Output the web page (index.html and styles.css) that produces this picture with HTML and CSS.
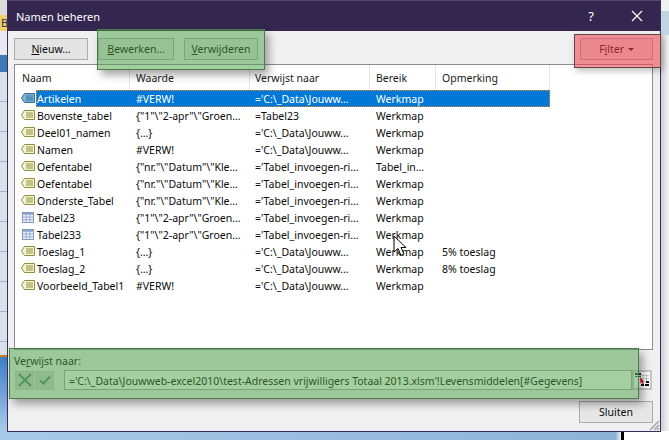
FILE: index.html
```html
<!DOCTYPE html>
<html lang="nl">
<head>
<meta charset="utf-8">
<title>Namen beheren</title>
<link rel="stylesheet" href="styles.css">
</head>
<body>
<svg class="defs" width="0" height="0" aria-hidden="true">
  <symbol id="tag" viewBox="0 0 14 11">
    <path d="M3.5.5H13.5V9.5H3.5L.5 5Z" fill="#f4f3d8" stroke="#8f9035"/>
    <path d="M5 3H12M5 5H12M5 7H12" stroke="#8f9035" stroke-width="1"/>
  </symbol>
  <symbol id="tag-sel" viewBox="0 0 14 11">
    <path d="M3.5.5H13.5V9.5H3.5L.5 5Z" fill="#7fb4d6" stroke="#2f6e9a"/>
    <path d="M5 3H12M5 5H12M5 7H12" stroke="#2f6e9a" stroke-width="1"/>
  </symbol>
  <symbol id="grid" viewBox="0 0 13 12">
    <rect x=".5" y=".5" width="12" height="11" fill="#eef2fa" stroke="#7b8fb8"/>
    <rect x="1" y="1" width="11" height="2" fill="#8ea3cc"/>
    <path d="M4.5 1V11M8.5 1V11M1 5.5H12M1 8.5H12" stroke="#93a6cc"/>
  </symbol>
</svg>

<div class="desk">
  <div class="left-strip">
    <div class="s-grey"></div>
    <div class="s-yellow">B</div>
    <div class="s-light"></div>
    <div class="s-blue"></div>
    <div class="s-cells"></div>
    <div class="s-sky"></div>
  </div>
  <div class="right-strip">
    <div class="r-white"></div>
    <div class="r-blue"></div>
    <div class="r-rest"></div>
    <div class="r-foot"></div>
  </div>
</div>
<div class="foot-bar"></div>

<section class="dialog">
  <header class="titlebar">
    <span class="title">Namen beheren</span>
    <span class="help">?</span>
    <svg class="close" width="12" height="12" viewBox="0 0 12 12"><path d="M1 1L11 11M11 1L1 11" stroke="#fff" stroke-width="1.2" fill="none"/></svg>
  </header>
  <div class="content">
    <div class="toolbar">
      <button class="btn new"><u>N</u>ieuw…</button>
      <button class="btn edit"><u>B</u>ewerken…</button>
      <button class="btn del"><u>V</u>erwijderen</button>
      <button class="btn filter">F<u>i</u>lter <span class="caret"></span></button>
    </div>
    <div class="list">
      <div class="list-head">
        <div>Naam</div><div>Waarde</div><div>Verwijst naar</div><div>Bereik</div><div>Opmerking</div>
      </div>
      <div class="row selected"><svg class="ic"><use href="#tag-sel"/></svg><div class="cells"><span>Artikelen</span><span>#VERW!</span><span>='C:\_Data\Jouww…</span><span>Werkmap</span><span></span></div></div>
      <div class="row"><svg class="ic"><use href="#tag"/></svg><div class="cells"><span>Bovenste_tabel</span><span>{"1"\"2-apr"\"Groen…</span><span>=Tabel23</span><span>Werkmap</span><span></span></div></div>
      <div class="row"><svg class="ic"><use href="#tag"/></svg><div class="cells"><span>Deel01_namen</span><span>{…}</span><span>='C:\_Data\Jouww…</span><span>Werkmap</span><span></span></div></div>
      <div class="row"><svg class="ic"><use href="#tag"/></svg><div class="cells"><span>Namen</span><span>#VERW!</span><span>='C:\_Data\Jouww…</span><span>Werkmap</span><span></span></div></div>
      <div class="row"><svg class="ic"><use href="#tag"/></svg><div class="cells"><span>Oefentabel</span><span>{"nr."\"Datum"\"Kle…</span><span>='Tabel_invoegen-ri…</span><span>Tabel_in…</span><span></span></div></div>
      <div class="row"><svg class="ic"><use href="#tag"/></svg><div class="cells"><span>Oefentabel</span><span>{"nr."\"Datum"\"Kle…</span><span>='Tabel_invoegen-ri…</span><span>Werkmap</span><span></span></div></div>
      <div class="row"><svg class="ic"><use href="#tag"/></svg><div class="cells"><span>Onderste_Tabel</span><span>{"nr."\"Datum"\"Kle…</span><span>='Tabel_invoegen-ri…</span><span>Werkmap</span><span></span></div></div>
      <div class="row"><svg class="ic"><use href="#grid"/></svg><div class="cells"><span>Tabel23</span><span>{"1"\"2-apr"\"Groen…</span><span>='Tabel_invoegen-ri…</span><span>Werkmap</span><span></span></div></div>
      <div class="row"><svg class="ic"><use href="#grid"/></svg><div class="cells"><span>Tabel233</span><span>{"1"\"2-apr"\"Groen…</span><span>='Tabel_invoegen-ri…</span><span>Werkmap</span><span></span></div></div>
      <div class="row"><svg class="ic"><use href="#tag"/></svg><div class="cells"><span>Toeslag_1</span><span>{…}</span><span>='C:\_Data\Jouww…</span><span>Werkmap</span><span>5% toeslag</span></div></div>
      <div class="row"><svg class="ic"><use href="#tag"/></svg><div class="cells"><span>Toeslag_2</span><span>{…}</span><span>='C:\_Data\Jouww…</span><span>Werkmap</span><span>8% toeslag</span></div></div>
      <div class="row"><svg class="ic"><use href="#tag"/></svg><div class="cells"><span>Voorbeeld_Tabel1</span><span>#VERW!</span><span>='C:\_Data\Jouww…</span><span>Werkmap</span><span></span></div></div>
    </div>
    <label class="ref-label">Ve<u>r</u>wijst naar:</label>
    <div class="ref-row">
      <div class="ref-btn">
        <svg width="14" height="14" viewBox="0 0 14 14"><path d="M1 1L13 13M13 1L1 13" stroke="#5a8a7c" stroke-width="2" fill="none"/></svg>
      </div>
      <div class="ref-btn">
        <svg width="12" height="10" viewBox="0 0 12 10"><path d="M1 5.5L4.5 8.5L11 1.5" stroke="#5a8a7c" stroke-width="2" fill="none"/></svg>
      </div>
      <div class="ref-input">='C:\_Data\Jouwweb-excel2010\test-Adressen vrijwilligers Totaal 2013.xlsm'!Levensmiddelen[#Gegevens]</div>
      <div class="ref-pick">
        <svg width="16" height="14" viewBox="0 0 16 14">
          <path d="M6 2.5H15M6 5.5H15M6 8.5H11M9 1V9M12.5 1V9" stroke="#c9c9c9"/>
          <rect x="1" y="0" width="6" height="2" fill="#0c2b66"/>
          <rect x="1" y="3" width="6" height="1" fill="#1e6e3c"/>
          <path d="M6 4L10 8.5L8.6 8.7L10 11L9 11.5L7.8 9.4L6.6 10.4Z" fill="#d8101c"/>
          <rect x="7" y="11" width="3" height="2" fill="#111"/>
          <rect x="11" y="11" width="4" height="2" fill="#111"/>
          <rect x="12" y="8" width="3" height="2" fill="#111"/>
        </svg>
      </div>
    </div>
    <div class="actions">
      <button class="btn close-btn">Sluiten</button>
    </div>
  </div>
  <svg class="grip" width="12" height="12" viewBox="0 0 12 12"><path d="M11 2L2 11M11 6L6 11M11 9L9 11" stroke="#a6a6a6" stroke-width="1.6" fill="none"/></svg>
</section>

<div class="mark mark-green mark-top"></div>
<div class="mark mark-red"></div>
<div class="mark mark-green mark-bottom"></div>

<svg class="cursor" width="14" height="22" viewBox="0 0 14 22"><path d="M1 1V17L5 13.5L8 20.5L11 19L8 12.5H13Z" fill="#fff" stroke="#000" stroke-width="1"/></svg>
</body>
</html>
```
FILE: styles.css
```css
* { box-sizing: border-box; }
html, body { margin: 0; padding: 0; }
body {
  width: 669px;
  height: 440px;
  overflow: hidden;
  position: relative;
  background: #fff;
  font-family: "Noto Sans", "Open Sans", sans-serif;
  font-size: 10.5px;
  color: #0a0a0a;
}
.defs { position: absolute; }

.desk { display: flex; justify-content: space-between; height: 431px; }
.left-strip { width: 8px; display: flex; flex-direction: column; }
.s-grey { height: 15px; background: #dcdcdc; }
.s-yellow { height: 16px; background: #f2cf6e; color: #234; font-size: 11px; line-height: 16px; padding-left: 1px; overflow: hidden; }
.s-light { height: 24px; background: #e6e9ee; }
.s-blue { height: 17px; background: #4079b6; }
.s-cells {
  height: 283px;
  background: repeating-linear-gradient(#d9e0e9 0 29px, #9fb4cc 29px 30px);
}
.s-sky { flex: 1; background: linear-gradient(#3e7ec6, #a8c9ea); border-top: 2px solid #c67c1d; }

.right-strip { width: 8px; display: flex; flex-direction: column; }
.r-white { height: 11px; background: #eef1f4; }
.r-blue { height: 24px; background: #c3d3e1; }
.r-rest { flex: 1; background: linear-gradient(90deg, #cfcfcf, #f4f4f4); }
.r-foot { height: 0; }
.foot-bar {
  height: 9px;
  background: linear-gradient(90deg, #a7c8e8, #8eb3d6 92%, #fff 93%);
  position: relative;
}
.foot-bar::after {
  content: "";
  position: absolute;
  left: 621px;
  top: 0;
  width: 3px;
  height: 9px;
  background: #000;
}

.dialog {
  position: absolute;
  left: 7px;
  top: 0;
  width: 654px;
  height: 432px;
  background: #f0f0f0;
  border: 1px solid #3a2d5c;
  border-top-color: #55486f;
  display: flex;
  flex-direction: column;
}
.titlebar {
  height: 30px;
  flex: none;
  background: #33264f;
  color: #fff;
  display: flex;
  align-items: center;
  padding-left: 8px;
}
.title { font-size: 11px; flex: 1; }
.help { font-size: 13px; width: 14px; margin-right: 33px; text-align: center; }
.close { margin-right: 17px; }

.content { flex: 1; padding: 7px 7px 0 6px; display: flex; flex-direction: column; }
.toolbar { display: flex; height: 22px; }
.btn {
  font: inherit;
  color: #0a0a0a;
  height: 22px;
  width: 74px;
  padding: 0 0 1px;
  background: #e4e4e4;
  border: 1px solid #adadad;
}
.btn.new { margin-right: 10px; }
.btn.edit { width: 76px; margin-right: 10px; }
.btn.filter { margin-left: auto; width: 73px; }
.caret {
  display: inline-block;
  border: 3px solid transparent;
  border-top-color: #111;
  border-bottom: 0;
  vertical-align: 2px;
  margin-left: 1px;
}

.list {
  margin-top: 4px;
  height: 286px;
  background: #fff;
  border: 1px solid #8c8c96;
  flex: none;
}
.list-head {
  display: grid;
  grid-template-columns: 115px 120px 120px 66px 114px;
  width: 535px;
  height: 25px;
  line-height: 26px;
  color: #1a1a1a;
}
.list-head div { padding-left: 6px; border-right: 1px solid #e5e5e5; }
.list-head div:first-child { padding-left: 7px; }
.list-head div:nth-child(3) { padding-left: 5px; }
.row { display: flex; height: 17px; align-items: center; width: 535px; }
.ic { width: 14px; height: 11px; margin-left: 6px; margin-right: 1px; flex: none; }
.cells {
  flex: 1;
  height: 17px;
  line-height: 18px;
  display: grid;
  grid-template-columns: 94px 120px 120px 66px 114px;
  white-space: nowrap;
}
.cells span { padding-left: 6px; overflow: hidden; }
.cells span:first-child { padding-left: 1px; }
.cells span:nth-child(3) { padding-left: 5px; }
.selected .cells {
  background: #0078d7;
  color: #fff;
  outline: 1px dotted #f08a24;
  outline-offset: -1px;
}

.ref-label { margin-top: 3px; height: 17px; line-height: 17px; }
.ref-row { display: flex; align-items: center; height: 20px; }
.ref-btn {
  width: 19px;
  height: 19px;
  margin-left: 1px;
  background: #d6d6d6;
  border: 1px solid #cfcfcf;
  display: flex;
  align-items: center;
  justify-content: center;
}
.ref-input {
  margin-left: 10px;
  width: 568px;
  height: 20px;
  line-height: 20px;
  padding-left: 4px;
  background: #fff;
  border: 1px solid #a8a8a8;
  white-space: nowrap;
  overflow: hidden;
}
.ref-pick {
  width: 20px;
  height: 20px;
  flex: none;
  background: #fff;
  border: 2px solid #c8c8c8;
  display: flex;
  align-items: center;
  justify-content: center;
  overflow: hidden;
}
.actions { display: flex; justify-content: flex-end; margin-top: 11px; }
.close-btn { background: #e6e6e6; }
.grip { position: absolute; right: 0; bottom: 0; }

.mark { position: absolute; }
.mark-green {
  background: rgba(74, 160, 66, .5);
  border: 1px solid #4f7a4d;
  box-shadow: 4px 5px 8px rgba(0, 0, 0, .35);
}
.mark-top { left: 97px; top: 29px; width: 168px; height: 41px; }
.mark-bottom { left: 9px; top: 348px; width: 630px; height: 51px; }
.mark-red {
  left: 574px;
  top: 34px;
  width: 87px;
  height: 34px;
  background: rgba(240, 60, 70, .55);
  border: 1px solid #5a4a4a;
  box-shadow: 2px 3px 6px rgba(0, 0, 0, .25);
}
.cursor { position: absolute; left: 393px; top: 235px; }
```
